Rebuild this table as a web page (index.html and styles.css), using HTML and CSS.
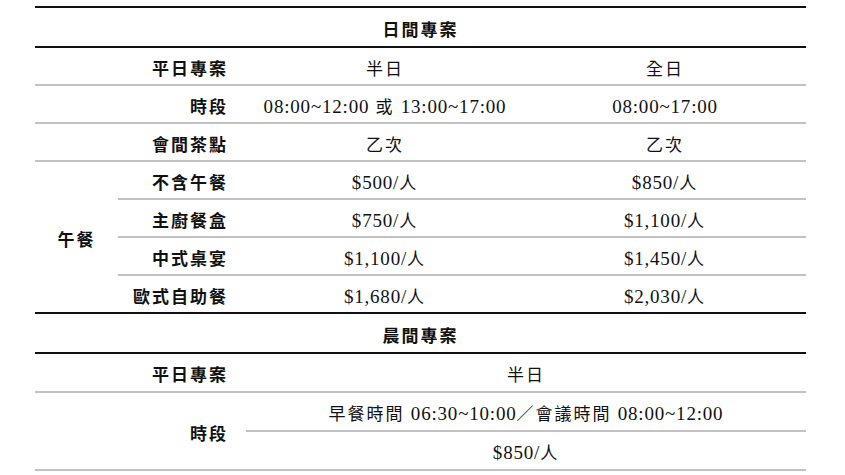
FILE: index.html
```html
<!DOCTYPE html>
<html lang="zh-Hant">
<head>
<meta charset="utf-8">
<title>專案價目</title>
<link rel="stylesheet" href="styles.css">
</head>
<body>
<div class="wrap">
<table class="rates">
  <colgroup>
    <col class="c1"><col class="c2"><col class="c3"><col class="c4">
  </colgroup>
  <tbody>
    <tr class="sec first"><th colspan="4">日間專案</th></tr>
    <tr><td></td><th class="lbl">平日專案</th><td>半日</td><td>全日</td></tr>
    <tr><td></td><th class="lbl">時段</th><td><span class="num">08:00~12:00</span> 或 <span class="num">13:00~17:00</span></td><td><span class="num">08:00~17:00</span></td></tr>
    <tr><td></td><th class="lbl">會間茶點</th><td>乙次</td><td>乙次</td></tr>
    <tr><th class="grp end" rowspan="4">午餐</th><th class="lbl">不含午餐</th><td><span class="num">$500/</span>人</td><td><span class="num">$850/</span>人</td></tr>
    <tr><th class="lbl">主廚餐盒</th><td><span class="num">$750/</span>人</td><td><span class="num">$1,100/</span>人</td></tr>
    <tr><th class="lbl">中式桌宴</th><td><span class="num">$1,100/</span>人</td><td><span class="num">$1,450/</span>人</td></tr>
    <tr class="last"><th class="lbl">歐式自助餐</th><td><span class="num">$1,680/</span>人</td><td><span class="num">$2,030/</span>人</td></tr>
    <tr class="sec"><th colspan="4">晨間專案</th></tr>
    <tr class="am"><td></td><th class="lbl">平日專案</th><td colspan="2">半日</td></tr>
    <tr class="am"><td rowspan="2"></td><th class="lbl" rowspan="2">時段</th><td colspan="2">早餐時間 <span class="num">06:30~10:00</span>／會議時間 <span class="num">08:00~12:00</span></td></tr>
    <tr class="am"><td colspan="2"><span class="num">$850/</span>人</td></tr>
  </tbody>
</table>
</div>
</body>
</html>
```

FILE: styles.css
```css
html, body {
  margin: 0;
  padding: 0;
  background: #ffffff;
}

.wrap {
  padding: 6px 0 0 35px;
}

.rates {
  width: 771px;
  table-layout: fixed;
  border-collapse: separate;
  border-spacing: 0;
  font-family: "Liberation Serif", "Noto Sans CJK TC", serif;
  font-size: 17px;
  letter-spacing: 2px;
  color: #111111;
}

.c1 { width: 83px; }
.c2 { width: 128px; }
.c3 { width: 278px; }
.c4 { width: 282px; }

.rates td,
.rates th {
  padding: 7px 0 0 0;
  height: 29px;
  line-height: 29px;
  text-align: center;
  vertical-align: middle;
  white-space: nowrap;
  border-bottom: 2px solid #c2c2c2;
}

.rates td {
  font-weight: 400;
}

.rates th {
  font-weight: 700;
}

.rates .num {
  font-size: 19px;
  line-height: 14px;
  letter-spacing: 0.8px;
}

.rates .lbl {
  text-align: right;
  padding-right: 18px;
}

.rates .sec th {
  height: 31px;
  line-height: 31px;
  border-bottom: 2px solid #111111;
}

.rates .first th {
  border-top: 2px solid #111111;
}

.rates .last td,
.rates .last th,
.rates .grp.end {
  border-bottom: 2px solid #111111;
}

.rates .am td,
.rates .am th {
  height: 30px;
  line-height: 30px;
}
```
